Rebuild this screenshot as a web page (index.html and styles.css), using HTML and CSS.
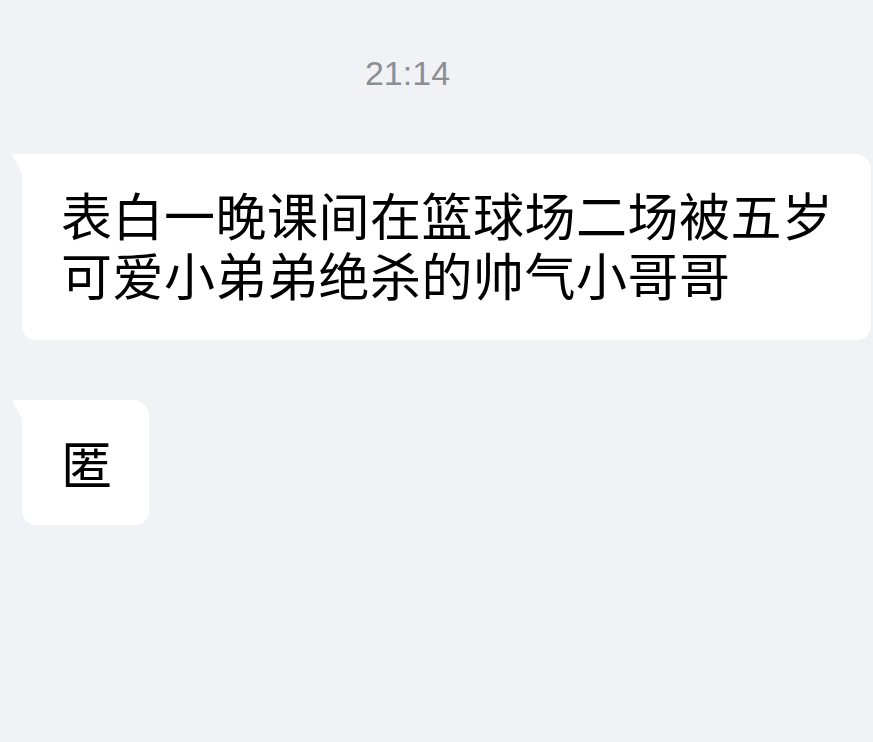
FILE: index.html
```html
<!DOCTYPE html>
<html lang="zh-CN">
<head>
<meta charset="utf-8">
<link rel="stylesheet" href="styles.css">
</head>
<body>
<div class="chat">
  <div class="time">21:14</div>
  <div class="bubble wide">表白一晚课间在篮球场二场被五岁可爱小弟弟绝杀的帅气小哥哥</div>
  <div class="bubble">匿</div>
</div>
</body>
</html>
```
FILE: styles.css
```css
html, body {
  margin: 0;
  padding: 0;
  background: #f1f2f6;
}
.chat {
  display: flex;
  flex-direction: column;
  align-items: flex-start;
  padding: 53px 2px 0 22px;
  height: 742px;
  box-sizing: border-box;
}
.time {
  align-self: stretch;
  text-align: center;
  font-family: "Liberation Sans", "Open Sans", sans-serif;
  font-size: 34px;
  line-height: 40px;
  color: #8d8e93;
  padding-right: 78px;
  margin-bottom: 61px;
}
.bubble {
  position: relative;
  background: #ffffff;
  border-radius: 0 16px 14px 14px;
  font-family: "Noto Sans CJK SC", sans-serif;
  font-size: 51px;
  line-height: 60px;
  letter-spacing: 0.5px;
  color: #000;
  padding: 32px 36px 33px 39px;
  margin-bottom: 60px;
}
.bubble::before {
  content: "";
  position: absolute;
  left: -10px;
  top: 0;
  width: 11px;
  height: 21px;
  background: #ffffff;
  clip-path: polygon(0 0, 100% 0, 100% 100%);
}
.wide {
  align-self: stretch;
  padding-top: 30px;
  padding-right: 30px;
  padding-bottom: 36px;
}
```
